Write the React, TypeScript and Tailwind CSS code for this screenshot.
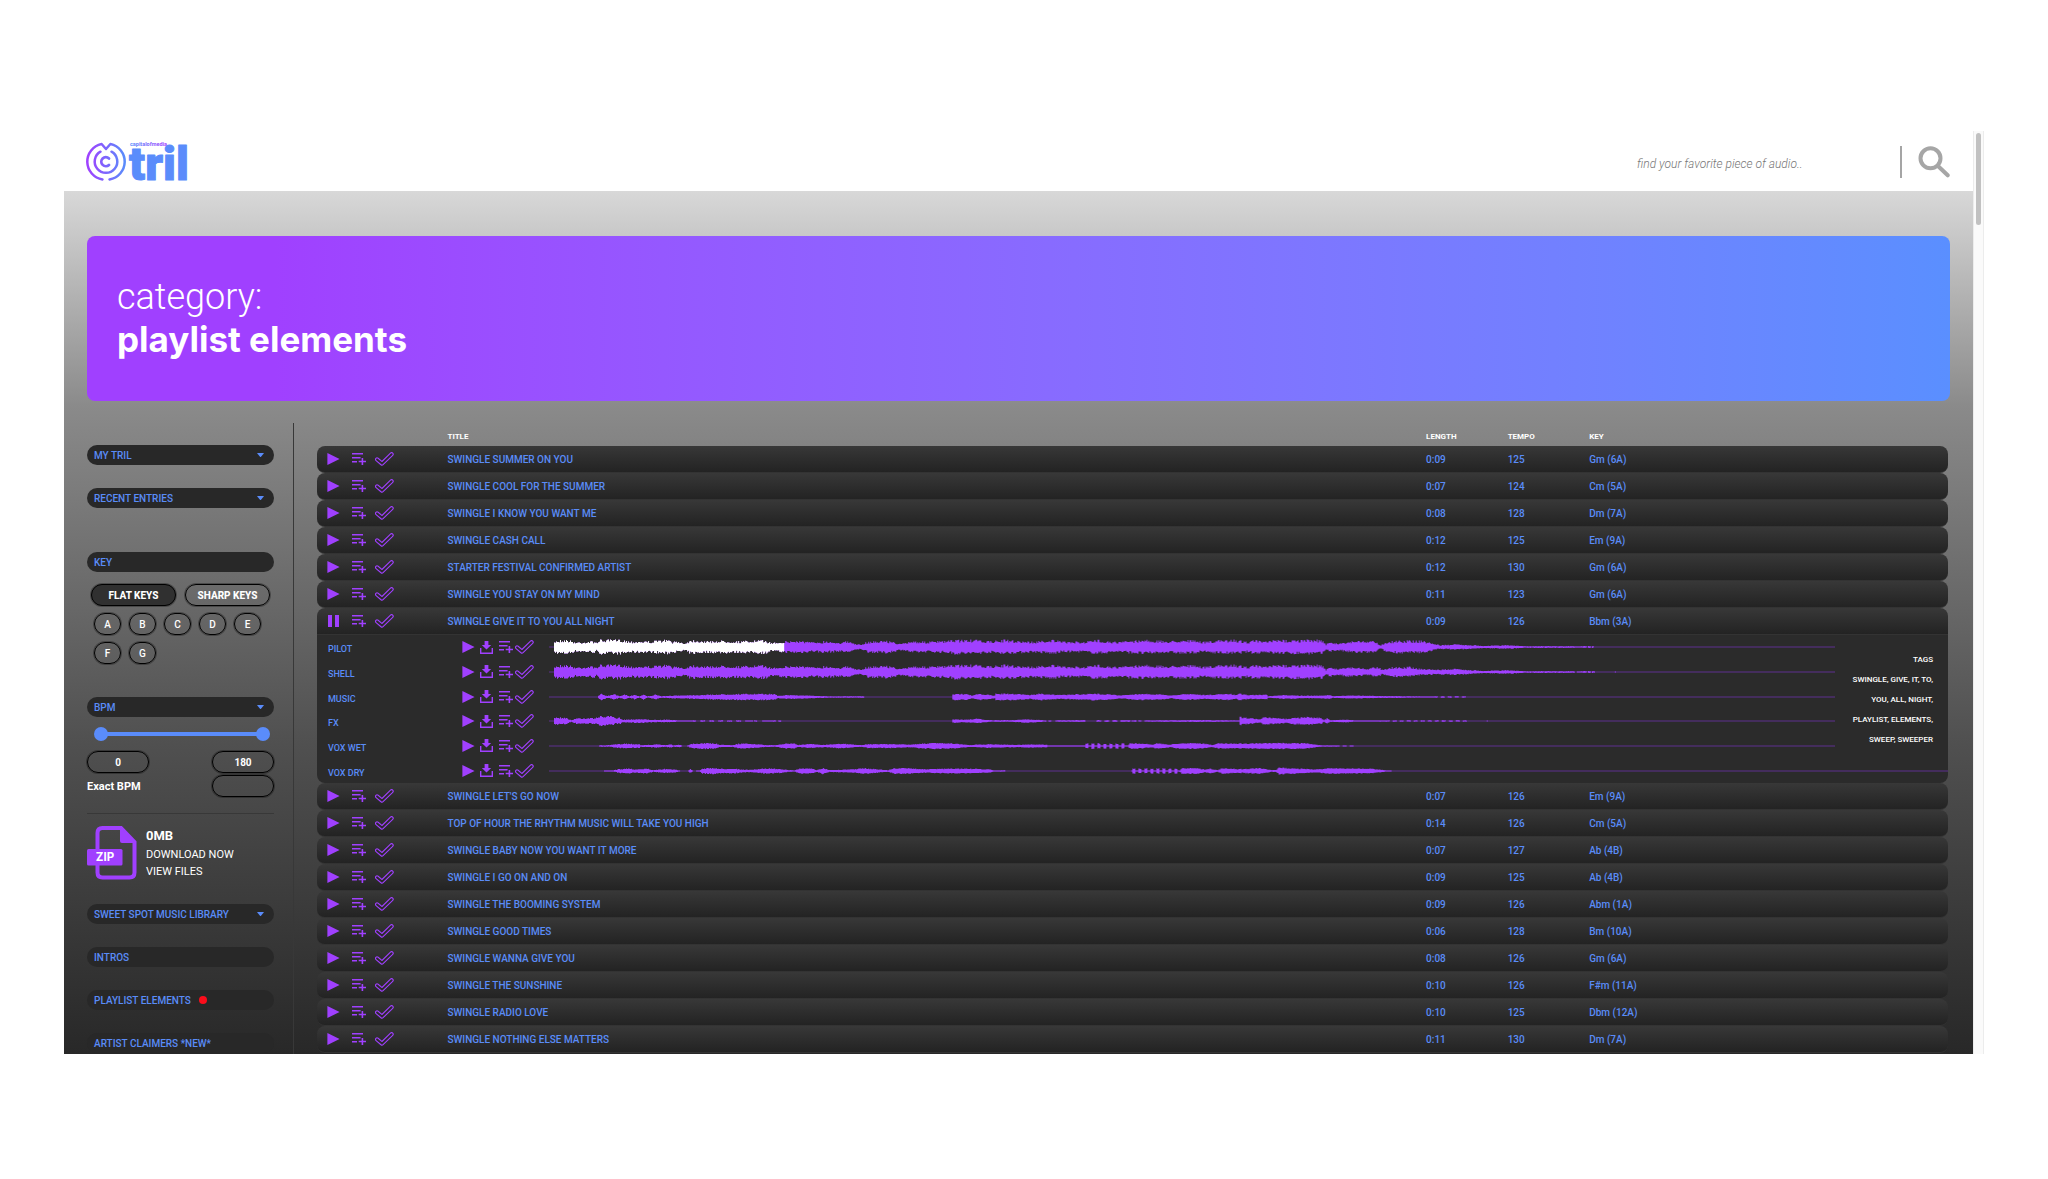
import React, { useState } from "react";

type Point = [number, number];

type Song = { title: string; length: string; tempo: number; songKey: string };

const songs: Song[] = [
  { title: "SWINGLE SUMMER ON YOU", length: "0:09", tempo: 125, songKey: "Gm (6A)" },
  { title: "SWINGLE COOL FOR THE SUMMER", length: "0:07", tempo: 124, songKey: "Cm (5A)" },
  { title: "SWINGLE I KNOW YOU WANT ME", length: "0:08", tempo: 128, songKey: "Dm (7A)" },
  { title: "SWINGLE CASH CALL", length: "0:12", tempo: 125, songKey: "Em (9A)" },
  { title: "STARTER FESTIVAL CONFIRMED ARTIST", length: "0:12", tempo: 130, songKey: "Gm (6A)" },
  { title: "SWINGLE YOU STAY ON MY MIND", length: "0:11", tempo: 123, songKey: "Gm (6A)" },
  { title: "SWINGLE GIVE IT TO YOU ALL NIGHT", length: "0:09", tempo: 126, songKey: "Bbm (3A)" },
  { title: "SWINGLE LET'S GO NOW", length: "0:07", tempo: 126, songKey: "Em (9A)" },
  { title: "TOP OF HOUR THE RHYTHM MUSIC WILL TAKE YOU HIGH", length: "0:14", tempo: 126, songKey: "Cm (5A)" },
  { title: "SWINGLE BABY NOW YOU WANT IT MORE", length: "0:07", tempo: 127, songKey: "Ab (4B)" },
  { title: "SWINGLE I GO ON AND ON", length: "0:09", tempo: 125, songKey: "Ab (4B)" },
  { title: "SWINGLE THE BOOMING SYSTEM", length: "0:09", tempo: 126, songKey: "Abm (1A)" },
  { title: "SWINGLE GOOD TIMES", length: "0:06", tempo: 128, songKey: "Bm (10A)" },
  { title: "SWINGLE WANNA GIVE YOU", length: "0:08", tempo: 126, songKey: "Gm (6A)" },
  { title: "SWINGLE THE SUNSHINE", length: "0:10", tempo: 126, songKey: "F#m (11A)" },
  { title: "SWINGLE RADIO LOVE", length: "0:10", tempo: 125, songKey: "Dbm (12A)" },
  { title: "SWINGLE NOTHING ELSE MATTERS", length: "0:11", tempo: 130, songKey: "Dm (7A)" },
];

const PLAYING = 6;

const fullBody: Point[] = [
  [0, 0], [4, 0], [4.1, 5.5], [12, 7], [20, 6.5], [26, 4.5], [45, 5.5], [47, 4], [49, 6.8], [72, 7], [80, 5.5], [103, 5.5], [118, 7], [123, 5],
  [130, 5.5], [134, 3.5], [142, 6.8], [157, 5.5], [175, 6], [190, 5.5], [216, 6.5], [221, 4], [235, 5.5], [250, 6], [263, 4.5], [275, 5.8], [290, 4.5],
  [297, 5.5], [311, 2], [318, 5.2], [337, 6.2], [352, 3], [363, 5.8], [378, 5], [400, 6], [405, 7], [425, 6.8], [440, 5.5], [455, 6.8],
  [483, 5], [503, 7], [512, 5.2], [533, 5], [548, 6.8], [567, 4.8], [593, 7], [616, 5.5], [637, 7], [652, 5], [672, 6.5], [684, 7],
  [698, 5.2], [705, 6.8], [715, 5], [723, 6.5], [750, 6.8], [773, 7],
];

const dashes = (from: number, to: number, amp: number, every: number): Point[] => {
  const out: Point[] = [];
  for (let x = from; x < to; x += every) {
    out.push([x, amp], [x + every * 0.5, amp], [x + every * 0.5 + 0.1, 0], [x + every - 0.1, 0]);
  }
  return out;
};

const beads = (from: number, count: number): Point[] =>
  Array.from({ length: count }, (_, i) => from + i * 6).flatMap((x): Point[] => [
    [x, 0.3], [x + 1, 2.6], [x + 3, 2.6], [x + 4, 0.3],
  ]);

const tracks: { name: string; span: number; rough: number; points: Point[] }[] = [
  {
    name: "PILOT", span: 1285, rough: 0.45,
    points: [...fullBody, [775.5, 2.5], [780, 4.5], [788, 3.5], [797, 5], [806, 6], [826, 5.5], [830, 1.5], [836, 5], [850, 6.2], [873, 6], [883, 3.5], [890, 1.8],
      [905, 2.6], [925, 1.8], [930, 1.2], [960, 1.8], [975, 0.8], [993, 0.8], [993.1, 0.2], [995, 0.8], [1024, 0.8], [1025, 0.2], ...dashes(1034, 1043, 0.9, 4), [1043, 0]],
  },
  {
    name: "SHELL", span: 1285, rough: 0.45,
    points: [...fullBody, [775.5, 2], [780, 4.5], [788, 3], [797, 5], [812, 3.8], [818, 3], [827, 5.5], [832, 2.5], [840, 4.5], [860, 5], [870, 3], [890, 2.4],
      [905, 3], [925, 1.8], [930, 1.2], [960, 1.8], [975, 0.8], [993, 0.8], [993.1, 0.2], [995, 0.8], [1024, 0.8], [1025, 0], ...dashes(1034, 1043, 0.9, 4), [1043, 0], [1064, 0], [1064.5, 1], [1066, 0]],
  },
  {
    name: "MUSIC", span: 1285, rough: 0.35,
    points: [[0, 0], [48, 0], [49, 1.5], [52, 3], [58, 1], [65, 2.6], [70, 0.8], [75, 2.6], [80, 0.7], [85, 2.4], [90, 0.6], [94, 2.6], [98, 0.6], [106, 2.2], [112, 0.8],
      [130, 1.6], [150, 2], [170, 2.6], [190, 3], [215, 3], [226, 2.8], [228, 1.4], [240, 2], [270, 1], [280, 0.7], [314, 0.7], [314.1, 0], [402, 0], [402.1, 3], [418, 3],
      [422, 1.5], [430, 3], [445, 1.5], [446, 3.3], [470, 3], [480, 2], [490, 3.3], [510, 2], [530, 2.8], [545, 3.2], [560, 2.8], [570, 1.5], [590, 3.2], [610, 2.6], [622, 1.5],
      [635, 3.2], [655, 2], [680, 3.2], [686, 2], [688, 3.4], [700, 2], [717, 2.2], [718, 0.7], [735, 2], [755, 1.2], [780, 1.8], [783, 0.8], [800, 1.6], [830, 1], [870, 0.6],
      [880, 0.6], [880.1, 0], ...dashes(884, 918, 0.7, 7), [920, 0]],
  },
  {
    name: "FX", span: 1285, rough: 0.4,
    points: [[0, 0], [4, 0], [4.1, 3.6], [16, 3.4], [22, 0.8], [27, 2.8], [46, 2.8], [49, 4.5], [63, 4.6], [66, 2.5], [70, 3.2], [74, 1.4], [90, 2], [108, 1], [116, 1.4], [130, 0.6],
      [140, 0.6], ...dashes(142, 190, 0.7, 9), [191, 0], ...dashes(201, 208, 0.7, 4), [209, 0], ...dashes(224, 232, 0.7, 5), [233, 0], [402, 0], [402.1, 1.8], [415, 1.4], [428, 2.2], [440, 0.8],
      [462, 0.8], [475, 1.8], [485, 1.4], [493, 0.8], ...dashes(494, 504, 0.7, 5), [505, 0], [507, 0.7], [535, 0.9], [536, 0], [546, 0], ...dashes(547, 570, 0.8, 8), [571, 0.8], [580, 0.8],
      [581, 0], ...dashes(584, 594, 0.7, 5), [596, 0.7], [650, 0.9], [689, 0.6], [690, 4], [700, 3], [710, 1.5], [713, 3.6], [725, 3], [735, 2.2], [745, 3.3], [757, 3.8], [771, 3.2],
      [774, 1], [777, 2.8], [780, 0.8], [796, 1.5], [805, 0.6], [835, 0.6], ...dashes(836, 915, 0.7, 7), [916, 0], [936, 0], [936.5, 1], [938, 0]],
  },
  {
    name: "VOX WET", span: 1285, rough: 0.35,
    points: [[0, 0], [49, 0], [50, 0.6], [60, 0.8], [65, 1.6], [75, 2.4], [90, 1.8], [91, 0.8], [108, 1.6], [115, 0.8], [122, 1.6], [124, 0.5], [130, 1.5], [133, 0], [137, 0],
      [142, 2.2], [155, 3], [167, 2.4], [170, 1.2], [183, 1], [190, 2.4], [200, 2.4], [215, 1], [225, 0.8], [235, 2.4], [245, 2.6], [248, 1], [260, 2], [275, 1.2], [290, 2.4],
      [305, 1.4], [312, 0.8], [318, 2], [340, 2], [360, 1.4], [370, 2.4], [385, 3], [405, 2.4], [420, 1], [440, 1.8], [465, 1.2], [480, 1.6], [497, 1.4], [498, 0.5], [533, 0.6],
      ...beads(535, 7), [578, 0.5], [580, 2.8], [590, 2.6], [603, 1.5], [606, 2.8], [620, 1.4], [630, 2.8], [640, 3], [655, 2.4], [662, 1], [668, 2.6], [700, 2.6], [730, 3], [755, 2.8],
      [765, 1.5], [772, 0.6], [785, 0.6], ...dashes(786, 806, 0.6, 7), [807, 0]],
  },
  {
    name: "VOX DRY", span: 1398, rough: 0.35,
    points: [[0, 0], [54, 0], [54.1, 0.5], [64, 0.6], [70, 2], [80, 2.6], [85, 1.6], [98, 2.4], [104, 0.8], [115, 2], [126, 1.4], [128, 1], [131, 0], [138, 0], [141, 2], [144, 0],
      [150, 0.4], [153, 2.6], [165, 3], [175, 2], [183, 2.6], [195, 1.2], [210, 1.8], [215, 2.6], [230, 2.2], [238, 1], [245, 0.6], [250, 2.6], [262, 2.4], [267, 1], [273, 3],
      [280, 1], [300, 1.6], [315, 2.8], [330, 1.6], [338, 0.8], [345, 2.8], [360, 2.8], [375, 1.8], [400, 2.4], [420, 2.4], [440, 1.6], [444, 0.6], [455, 0.6], [455.1, 0], [581, 0],
      ...beads(582, 8), [630, 0.8], [632, 3], [648, 2.8], [655, 1.4], [660, 2.4], [668, 0.8], [672, 2.8], [690, 2], [710, 2.8], [722, 0.8], [726, 1], [729, 3.4], [745, 2.6], [765, 1.6],
      [780, 2.8], [805, 2.6], [820, 2.4], [833, 1.2], [836, 0.5], [841, 0.5], [841.1, 0], [842, 0]],
  },
];

function wavePath(points: Point[], rough: number, mid: number): string {
  const end = points[points.length - 1][0];
  let seed = 7;
  const rand = () => {
    seed = (seed * 16807) % 2147483647;
    return seed / 2147483647;
  };
  let d = "";
  let k = 0;
  for (let x = 0; x <= end; x += 1) {
    while (k < points.length - 2 && points[k + 1][0] <= x) k += 1;
    const [x0, a0] = points[k];
    const [x1, a1] = points[k + 1];
    const t = x1 === x0 ? 1 : Math.min(1, Math.max(0, (x - x0) / (x1 - x0)));
    const a = a0 + (a1 - a0) * t;
    const r1 = rand();
    const r2 = rand();
    if (a < 0.15) continue;
    const up = Math.max(0.6, a * (1.1 - rough * r1));
    const down = Math.max(0.6, a * (1.1 - rough * r2));
    d += `M${x} ${(mid - up).toFixed(1)}h1v${(up + down).toFixed(1)}h-1z`;
  }
  return d;
}

function Waveform({ name, span, rough, points, played }: (typeof tracks)[number] & { played?: boolean }) {
  const d = wavePath(points, rough, 9);
  return (
    <svg className="block h-[18px] w-full" viewBox={`0 0 ${span} 18`} preserveAspectRatio="none" role="img" aria-label={`${name} waveform`}>
      <rect x="0" y="8.5" width={span} height="1" fill="#5e3090" />
      <path d={d} fill="#a040ff" />
      {played && (
        <>
          <clipPath id="played">
            <rect x="0" y="0" width="235" height="18" />
          </clipPath>
          <path d={d} fill="#ffffff" clipPath="url(#played)" />
        </>
      )}
    </svg>
  );
}

const PlayIcon = () => (
  <svg className="h-3 w-[13px]" viewBox="0 0 13 12" fill="#a040ff" aria-hidden="true">
    <path d="M.4 0 12.6 6 .4 12z" />
  </svg>
);

const PauseIcon = () => (
  <svg className="h-3 w-[13px]" viewBox="0 0 13 12" fill="#a040ff" aria-hidden="true">
    <path d="M1 0h4v12H1zM8 0h4v12H8z" />
  </svg>
);

const QueueIcon = () => (
  <svg className="h-3 w-[14px]" viewBox="0 0 14 12" fill="#a040ff" aria-hidden="true">
    <path d="M0 0h11v1.4H0zM0 4h8.6v1.4H0zM0 8h5v1.4H0zM9.6 5h1.6v2.8h2.8v1.5h-2.8V12H9.6V9.3H6.7V7.8h2.9z" />
  </svg>
);

const CheckIcon = () => (
  <svg className="h-[14px] w-[19px]" viewBox="0 0 19 14" fill="none" strokeLinecap="round" strokeLinejoin="round" aria-hidden="true">
    <path d="M2.1 7.4 7 11.6 16.6 2.2" stroke="#a040ff" strokeWidth="4.2" />
    <path d="M2.1 7.4 7 11.6 16.6 2.2" stroke="#2b2b2b" strokeWidth="2" />
  </svg>
);

const DownloadIcon = () => (
  <svg className="h-[13px] w-[13px]" viewBox="0 0 13 13" aria-hidden="true">
    <path d="M4.6 0h3.8v4h2.8L6.5 8.4 1.8 4h2.8z" fill="#a040ff" />
    <path d="M.7 7v5.2h11.6V7" fill="none" stroke="#a040ff" strokeWidth="1.4" />
  </svg>
);

function IconButton({ label, children }: { label: string; children: React.ReactNode }) {
  return (
    <button type="button" aria-label={label} className="flex shrink-0 cursor-pointer items-center justify-center">
      {children}
    </button>
  );
}

function Pill({ children, arrow }: { children: React.ReactNode; arrow?: boolean }) {
  return (
    <button
      type="button"
      className="flex h-5 w-full shrink-0 cursor-pointer items-center rounded-full bg-[#282828] px-[7px] text-left text-[10px] font-medium text-[#5a8cf8]"
    >
      {children}
      {arrow && (
        <svg className="mr-[3px] ml-auto h-1 w-[7px]" viewBox="0 0 7 4" fill="#5a8cfa" aria-hidden="true">
          <path d="M0.5 0h6q.5 0 .2.5L4 3.7q-.5.4-1 0L.3.5Q0 0 .5 0z" />
        </svg>
      )}
    </button>
  );
}

function Logo() {
  return (
    <a href="#home" aria-label="tril by capitalofmedia" className="block">
      <svg className="h-10 w-[103px] overflow-visible" viewBox="0 0 103 40">
        <defs>
          <linearGradient id="mark" x1="0" x2="38" y1="0" y2="0" gradientUnits="userSpaceOnUse">
            <stop offset="0" stopColor="#a040ff" />
            <stop offset="1" stopColor="#5a8cfb" />
          </linearGradient>
          <linearGradient id="byline" x1="0" x2="1" y1="0" y2="0">
            <stop offset="0" stopColor="#5a8cfb" />
            <stop offset="1" stopColor="#a040ff" />
          </linearGradient>
        </defs>
        <g fill="none" stroke="url(#mark)" strokeWidth="2.5" strokeLinecap="round" strokeLinejoin="round">
          <path d="M15.5 37.4A18 18 0 0 1 14.6 2L19 7 23.4 2A18 18 0 0 1 22.5 37.4" />
          <path d="M13.5 9.7A11.3 11.3 0 1 0 24.5 9.7" />
          <path d="M22 16.5A4.5 4.5 0 1 0 22 22.9" strokeWidth="2.8" />
        </g>
        <text x="43" y="4" fontFamily="Roboto" fontSize="5.5" fontWeight="700" fill="url(#byline)">
          capitalofmedia
        </text>
        <text x="42" y="38.3" fontFamily="Roboto" fontSize="47" fontWeight="900" fill="#5a8cfb" stroke="#5a8cfb" strokeWidth="1" strokeLinejoin="round">
          tril
        </text>
      </svg>
    </a>
  );
}

function Header() {
  return (
    <header className="flex h-[60px] shrink-0 items-center justify-between bg-white px-[23px] pt-0.5">
      <Logo />
      <form role="search" className="flex items-center" onSubmit={(e) => e.preventDefault()}>
        <input
          type="text"
          aria-label="Search audio"
          placeholder="find your favorite piece of audio.."
          className="mr-2 w-[255px] bg-transparent pt-1 text-[12px] font-light text-[#777] italic outline-none placeholder:text-[#777]"
        />
        <span className="h-8 w-0.5 bg-[#a5a5a5]" />
        <button type="submit" aria-label="Search" className="ml-4 cursor-pointer">
          <svg className="size-8" viewBox="0 0 32 32" fill="none" stroke="#a6a6a6" strokeWidth="4" strokeLinecap="round" aria-hidden="true">
            <circle cx="12.5" cy="12.3" r="10" />
            <path d="M20.5 20.5 29.7 29.3" />
          </svg>
        </button>
      </form>
    </header>
  );
}

const thumb =
  "pointer-events-none absolute inset-0 m-0 h-[14px] w-full appearance-none bg-transparent outline-none [&::-webkit-slider-thumb]:pointer-events-auto [&::-webkit-slider-thumb]:size-[14px] [&::-webkit-slider-thumb]:appearance-none [&::-webkit-slider-thumb]:rounded-full [&::-webkit-slider-thumb]:bg-[#5a8cfb]";

const ring = "rounded-full border border-black shadow-[0_0_0_1px_rgba(0,0,0,0.3)]";

const bpmBox = `${ring} h-[22px] w-[62px] bg-transparent text-center text-[10px] font-bold text-white outline-none`;

function Sidebar() {
  const [low, setLow] = useState("0");
  const [high, setHigh] = useState("180");
  const [exact, setExact] = useState("");
  return (
    <aside className="flex w-[207px] shrink-0 flex-col border-r border-[#383838] pt-[22px] pr-[19px]">
      <div className="flex flex-col gap-[23px]">
        <Pill arrow>MY TRIL</Pill>
        <Pill arrow>RECENT ENTRIES</Pill>
      </div>

      <div className="mt-11">
        <Pill>KEY</Pill>
        <div className="mt-3 flex gap-[9px] px-1">
          <button type="button" className={`${ring} h-[22px] flex-1 bg-[#303030] text-[10px] font-extrabold text-white`}>
            FLAT KEYS
          </button>
          <button type="button" className={`${ring} h-[22px] flex-1 text-[10px] font-extrabold text-white`}>
            SHARP KEYS
          </button>
        </div>
        <div className="mt-[7px] flex flex-wrap gap-x-2 gap-y-[7px] px-[7px]">
          {["A", "B", "C", "D", "E", "F", "G"].map((k) => (
            <button key={k} type="button" className={`${ring} h-[22px] w-[27px] text-[10px] font-medium text-white`}>
              {k}
            </button>
          ))}
        </div>
      </div>

      <div className="mt-[33px]">
        <Pill arrow>BPM</Pill>
        <div className="relative mt-[10px] mr-1 ml-[7px] flex h-[14px] items-center px-1">
          <div className="h-1 w-full bg-[#5a8cfb]" />
          <input type="range" aria-label="Minimum BPM" min="0" max="180" value={low} onChange={(e) => setLow(e.target.value)} className={thumb} />
          <input type="range" aria-label="Maximum BPM" min="0" max="180" value={high} onChange={(e) => setHigh(e.target.value)} className={thumb} />
        </div>
        <div className="mt-[10px] flex justify-between">
          <input type="text" aria-label="Lowest BPM" value={low} onChange={(e) => setLow(e.target.value)} className={bpmBox} />
          <input type="text" aria-label="Highest BPM" value={high} onChange={(e) => setHigh(e.target.value)} className={bpmBox} />
        </div>
        <div className="mt-0.5 flex items-center justify-between">
          <label htmlFor="exact" className="pt-0.5 text-[11px] font-bold text-white">
            Exact BPM
          </label>
          <input id="exact" type="text" value={exact} onChange={(e) => setExact(e.target.value)} className={bpmBox} />
        </div>
      </div>

      <hr className="mt-4 border-[#383838]" />

      <div className="mt-3 flex items-start gap-[9px]">
        <svg className="h-[54px] w-[50px] shrink-0" viewBox="0 0 50 54" aria-hidden="true">
          <path d="M15.5 2H34L47.5 16V46.5Q47.5 51.5 42.5 51.5H15.5Q10.5 51.5 10.5 46.5V7Q10.5 2 15.5 2Z" fill="none" stroke="#a040ff" strokeWidth="4" />
          <path d="M33 1V15Q33 17 35 17H48.5z" fill="#a040ff" />
          <rect x="0" y="23" width="35.5" height="16.5" rx="1.5" fill="#a040ff" />
          <text x="18" y="35.2" textAnchor="middle" fontFamily="Inter" fontSize="11.5" fontWeight="700" fill="#fff">
            ZIP
          </text>
        </svg>
        <div className="flex flex-col items-start text-white">
          <span className="text-[13px] leading-5 font-bold">0MB</span>
          <a href="#download" className="text-[11px] leading-[18px]">
            DOWNLOAD NOW
          </a>
          <a href="#files" className="text-[11px] leading-[15px]">
            VIEW FILES
          </a>
        </div>
      </div>

      <div className="mt-6 flex flex-col gap-[23px]">
        <Pill arrow>SWEET SPOT MUSIC LIBRARY</Pill>
        <Pill>INTROS</Pill>
        <Pill>
          PLAYLIST ELEMENTS
          <span className="ml-2 size-2 rounded-full bg-[#fb0d1b]" />
        </Pill>
        <Pill>ARTIST CLAIMERS *NEW*</Pill>
      </div>
    </aside>
  );
}

function TrackPanel() {
  return (
    <div className="relative grid h-[148px] grid-rows-6 rounded-b-lg bg-[#2b2b2b]">
      {tracks.map((t, i) => (
        <div key={t.name} className="flex items-center">
          <span className="w-[145px] shrink-0 pt-1 pl-[11px] text-[9px] leading-3 font-medium text-[#5a8cf8]">{t.name}</span>
          <div className="flex w-[87px] shrink-0 items-center">
            <IconButton label={`Play ${t.name}`}><PlayIcon /></IconButton>
            <span className="w-[5px]" />
            <IconButton label={`Download ${t.name}`}><DownloadIcon /></IconButton>
            <span className="w-1.5" />
            <IconButton label={`Queue ${t.name}`}><QueueIcon /></IconButton>
            <span className="w-0.5" />
            <IconButton label={`Select ${t.name}`}><CheckIcon /></IconButton>
          </div>
          <div className={i < 5 ? "mr-[113px] min-w-0 flex-1" : "min-w-0 flex-1"}>
            <Waveform {...t} played={i === 0} />
          </div>
        </div>
      ))}
      <p className="absolute top-[15px] right-[15px] text-right text-[8px] leading-[20px] font-medium whitespace-nowrap text-white">
        TAGS
        <br />
        SWINGLE, GIVE, IT, TO,
        <br />
        YOU, ALL, NIGHT,
        <br />
        PLAYLIST, ELEMENTS,
        <br />
        SWEEP, SWEEPER
      </p>
    </div>
  );
}

const cell = "h-[27px] border-b border-[#333] bg-linear-to-b from-[#383838] to-[#232323] p-0 text-[10px] font-medium text-[#5a8cf8]";

function Playlist() {
  return (
    <div className="min-w-0 flex-1 pr-0.5 pl-[23px]">
      <table className="w-full table-fixed border-separate border-spacing-0 text-left">
        <thead>
          <tr className="text-[8px] leading-[10px] font-bold text-white">
            <th scope="col" aria-label="Actions" className="h-[23px] w-[8%] p-0" />
            <th scope="col" className="w-[60%] p-0 pt-1">TITLE</th>
            <th scope="col" className="w-[5%] p-0 pt-1">LENGTH</th>
            <th scope="col" className="w-[5%] p-0 pt-1">TEMPO</th>
            <th scope="col" className="w-[22%] p-0 pt-1">KEY</th>
          </tr>
        </thead>
        <tbody>
          {songs.map((s, i) => {
            const open = i === PLAYING;
            return (
              <React.Fragment key={s.title}>
                <tr>
                  <td className={`${cell} ${open ? "rounded-tl-lg" : "rounded-l-lg"}`}>
                    <div className="flex items-center pl-[10px]">
                      <IconButton label={open ? "Pause" : "Play"}>{open ? <PauseIcon /> : <PlayIcon />}</IconButton>
                      <span className="w-3" />
                      <IconButton label="Add to queue"><QueueIcon /></IconButton>
                      <span className="w-[9px]" />
                      <IconButton label="Select"><CheckIcon /></IconButton>
                    </div>
                  </td>
                  <td className={cell}>{s.title}</td>
                  <td className={cell}>{s.length}</td>
                  <td className={cell}>{s.tempo}</td>
                  <td className={`${cell} ${open ? "rounded-tr-lg" : "rounded-r-lg"}`}>{s.songKey}</td>
                </tr>
                {open && (
                  <tr>
                    <td colSpan={5} className="p-0">
                      <TrackPanel />
                    </td>
                  </tr>
                )}
              </React.Fragment>
            );
          })}
        </tbody>
      </table>
    </div>
  );
}

export default function App() {
  return (
    <div className="h-screen overflow-hidden bg-white px-16 pt-[131px] pb-[125px] font-[Roboto,sans-serif]">
      <div className="flex h-full">
        <div className="flex min-w-0 flex-1 flex-col overflow-hidden">
          <Header />
          <main className="flex min-h-0 flex-1 flex-col bg-[linear-gradient(to_bottom,#d8d8d8_0%,#8a8a8a_25%,#505050_64%,#282828_100%)] px-[23px] pt-[45px]">
            <section className="flex h-[165px] shrink-0 flex-col justify-center rounded-lg bg-linear-to-r from-[#a040ff] from-10% to-[#5a8fff] pl-[30px] text-white">
              <h1 className="text-[36px] leading-[42px] font-light">
                category:
                <br />
                <strong className="font-[Inter,sans-serif] text-[35px] font-bold">playlist elements</strong>
              </h1>
            </section>
            <div className="mt-[22px] flex min-h-0 flex-1">
              <Sidebar />
              <Playlist />
            </div>
          </main>
        </div>
        <div className="w-[11px] shrink-0 border-x border-[#ececec] bg-[#fafafa] px-0.5 pt-0.5">
          <div className="h-[10%] rounded-full bg-[#c1c1c1]" />
        </div>
      </div>
    </div>
  );
}
